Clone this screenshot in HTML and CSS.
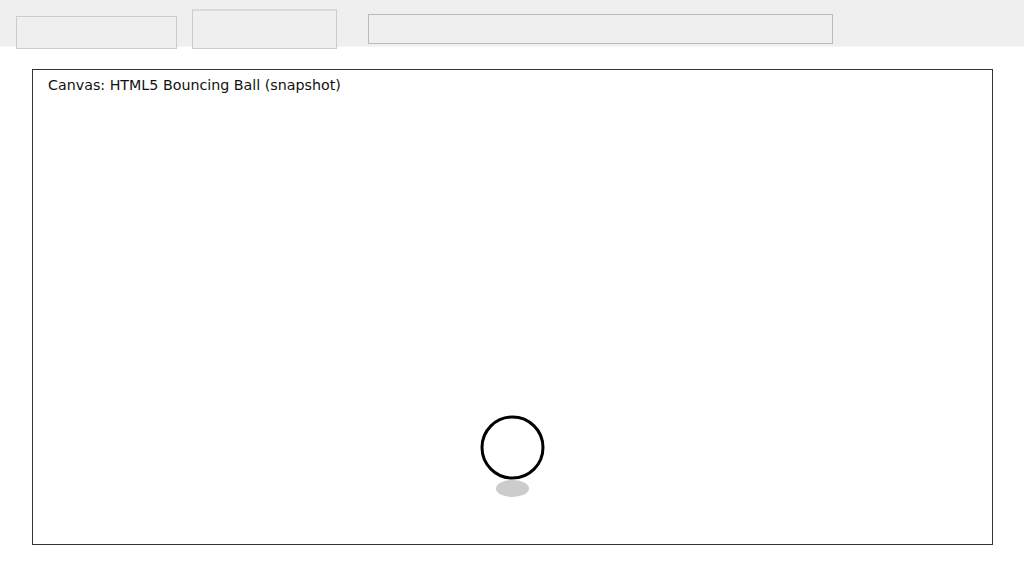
FILE: index.html
```html
<!DOCTYPE html>
<html lang="en">
<head>
  <meta charset="UTF-8" />
  <meta name="viewport" content="width=device-width, initial-scale=1.0" />
  <title>HTML5 Bouncing Ball</title>
  <link rel="stylesheet" href="styles.css">
</head>
<body>
  <div class="toolbar">
    <div class="control control-select"></div>
    <div class="control control-button"></div>
    <div class="control control-range"></div>
  </div>

  <div class="stage">
    <div class="canvas-frame">
      <div class="canvas-label">Canvas: HTML5 Bouncing Ball (snapshot)</div>
      <!-- Ball and its shadow, in frame coordinates -->
      <svg class="canvas-scene" viewBox="0 0 959 474" width="959" height="474">
        <ellipse cx="479.5" cy="418.5" rx="16.5" ry="8.5" fill="#cccccc" />
        <circle cx="479.5" cy="377.5" r="30.5" fill="#ffffff" stroke="#000000" stroke-width="3" />
      </svg>
    </div>
  </div>
</body>
</html>
```

FILE: styles.css
```css
body {
  margin: 0;
  padding: 0;
  background-color: #fff;
  font-family: "DejaVu Sans", sans-serif;
}
.toolbar {
  display: flex;
  align-items: flex-start;
  height: 46px;
  padding-left: 16px;
  background-color: #efefef;
  border-bottom: 1px solid #f6f6f6;
}
.control {
  box-sizing: border-box;
  background-color: #efefef;
  border: 1px solid #cccccc;
  flex-shrink: 0;
}
.control-select {
  width: 161px;
  height: 33px;
  margin-top: 16px;
}
.control-button {
  width: 145px;
  height: 40px;
  margin-top: 9px;
  margin-left: 15px;
  border-top: 2px solid #d9d9d9;
}
.control-range {
  width: 465px;
  height: 30px;
  margin-top: 14px;
  margin-left: 31px;
  border-color: #bbbbbb;
}
.stage {
  padding: 22px 0 0 32px;
}
.canvas-frame {
  position: relative;
  width: 959px;
  height: 474px;
  border: 1px solid #333;
  background-color: #fff;
}
.canvas-label {
  position: absolute;
  top: 7px;
  left: 15px;
  font-size: 14.25px;
  color: #111;
}
.canvas-scene {
  display: block;
}
```
